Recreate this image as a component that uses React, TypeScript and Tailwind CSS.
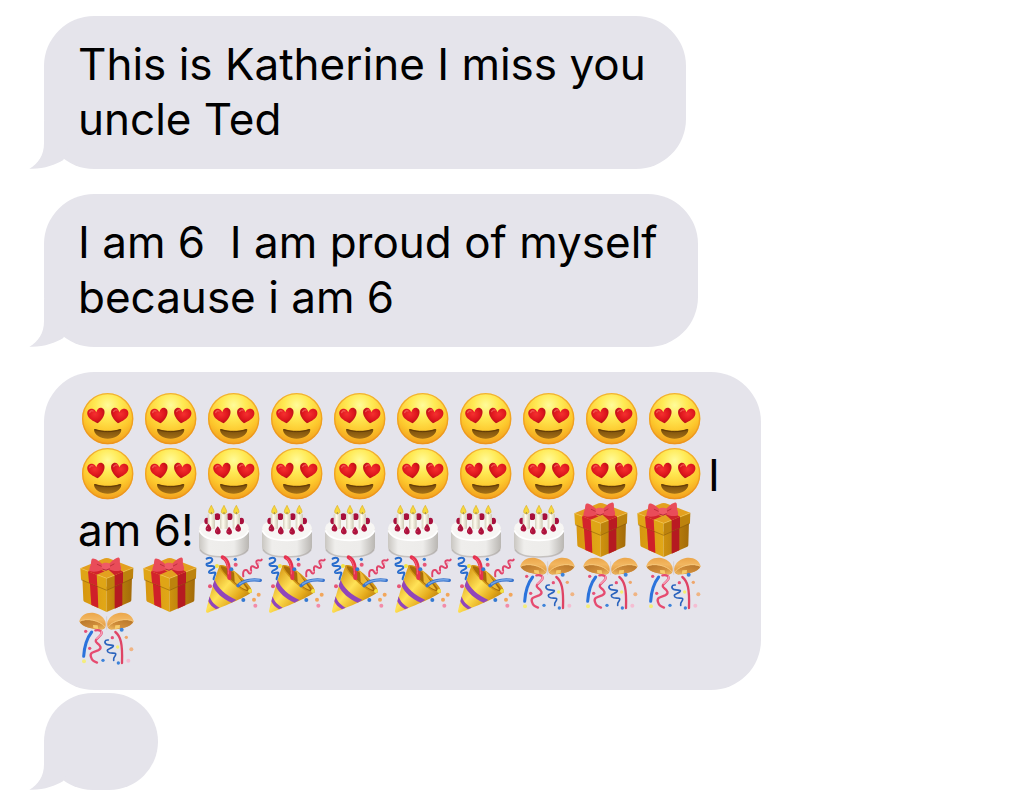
import type { ReactNode } from "react";

type EmojiName = "love" | "cake" | "gift" | "popper" | "ball";

const LABELS: Record<EmojiName, string> = {
  love: "smiling face with heart eyes",
  cake: "birthday cake",
  gift: "wrapped gift",
  popper: "party popper",
  ball: "confetti ball",
};

function EmojiSprite() {
  return (
    <svg className="absolute size-0" aria-hidden="true">
      <defs>
        <radialGradient id="face" cx="50%" cy="24%" r="78%">
          <stop offset="0" stopColor="#fffb9a" />
          <stop offset="0.3" stopColor="#ffea55" />
          <stop offset="0.68" stopColor="#fdc72c" />
          <stop offset="1" stopColor="#f09a1c" />
        </radialGradient>
        <radialGradient id="heart" cx="45%" cy="40%" r="65%">
          <stop offset="0" stopColor="#f5302f" />
          <stop offset="0.6" stopColor="#de161d" />
          <stop offset="1" stopColor="#ad0e15" />
        </radialGradient>
        <linearGradient id="mouth" x1="0" y1="0" x2="0" y2="1">
          <stop offset="0" stopColor="#774c0b" />
          <stop offset="1" stopColor="#a47016" />
        </linearGradient>
        <linearGradient id="icing" x1="0" y1="0" x2="1" y2="0">
          <stop offset="0" stopColor="#c9c6c1" />
          <stop offset="0.2" stopColor="#efeeec" />
          <stop offset="0.7" stopColor="#edecea" />
          <stop offset="1" stopColor="#b9b6b2" />
        </linearGradient>
        <linearGradient id="candle" x1="0" y1="0" x2="1" y2="0">
          <stop offset="0" stopColor="#d5cfbd" />
          <stop offset="0.4" stopColor="#fffdf0" />
          <stop offset="1" stopColor="#cfc8b4" />
        </linearGradient>
        <linearGradient id="boxLeft" x1="0" y1="0" x2="1" y2="0">
          <stop offset="0" stopColor="#d6960f" />
          <stop offset="1" stopColor="#e2a817" />
        </linearGradient>
        <linearGradient id="boxRight" x1="0" y1="0" x2="1" y2="0">
          <stop offset="0" stopColor="#cf920f" />
          <stop offset="1" stopColor="#a36b09" />
        </linearGradient>
        <linearGradient id="cone" x1="0" y1="0.3" x2="0.8" y2="1">
          <stop offset="0" stopColor="#d89713" />
          <stop offset="0.4" stopColor="#ffe257" />
          <stop offset="0.7" stopColor="#e5ab1c" />
          <stop offset="1" stopColor="#a96d08" />
        </linearGradient>
        <linearGradient id="shell" x1="0" y1="0" x2="0" y2="1">
          <stop offset="0" stopColor="#eba64a" />
          <stop offset="0.4" stopColor="#f2b660" />
          <stop offset="1" stopColor="#dc9238" />
        </linearGradient>
        <linearGradient id="shellInside" x1="0" y1="0" x2="1" y2="1">
          <stop offset="0" stopColor="#b5752a" />
          <stop offset="0.6" stopColor="#d08d3a" />
          <stop offset="1" stopColor="#f1bd62" />
        </linearGradient>
        <path
          id="heartShape"
          d="M32 49C19 43 3 35 1 22C-1 10 9 3 18 6C23 8 26 11 28 16C30 7 37 0 45 3C55 7 54 20 49 29C45 37 38 44 32 49Z"
        />
        <g id="halfShell">
          <path d="M4 25C8 6 28-4 49 0C71 4 86 22 83 38C82 47 76 50 66 49C44 48 10 42 4 25Z" fill="url(#shell)" />
          <path d="M5 26C24 15 64 22 81 42C78 48 73 50 65 49C44 48 12 42 5 26Z" fill="url(#shellInside)" />
          <path d="M5 25C25 14 64 21 81 41" fill="none" stroke="#f6c77a" strokeWidth="3" />
        </g>
      </defs>

      <symbol id="love" viewBox="0 0 189 165" overflow="visible">
        <circle cx="89" cy="77" r="77" fill="url(#face)" />
        <circle cx="89" cy="77" r="75" fill="none" stroke="#e98c1b" strokeWidth="4" opacity="0.6" />
        <use href="#heartShape" x="27" y="42" fill="url(#heart)" />
        <g transform="translate(152 42) scale(-1 1)">
          <use href="#heartShape" fill="url(#heart)" />
        </g>
        <path d="M35 59Q38 51 45 54" fill="none" stroke="#ff8d7d" strokeWidth="4" strokeLinecap="round" opacity="0.5" />
        <path d="M107 56Q111 49 117 51" fill="none" stroke="#ff8d7d" strokeWidth="4" strokeLinecap="round" opacity="0.5" />
        <path
          d="M48 111C48 107 51 107 55 109C76 115 102 115 123 109C127 107 130 107 130 111C128 127 110 137 89 137C68 137 50 127 48 111Z"
          fill="url(#mouth)"
        />
        <path d="M50 110C75 118 103 118 128 110" fill="none" stroke="#623b06" strokeWidth="3" />
      </symbol>

      <symbol id="cake" viewBox="0 0 189 165" overflow="visible">
        <path d="M15 77V132C15 151 48 163 90 163C132 163 165 151 165 132V77Z" fill="url(#icing)" />
        <path d="M18 140C28 156 58 162 90 162C122 162 152 156 162 140" fill="none" stroke="#aaa5a1" strokeWidth="5" opacity="0.6" />
        <ellipse cx="90" cy="77" rx="75" ry="34" fill="#f7f6f4" />
        <path d="M16 82C24 102 52 112 90 112C128 112 156 102 164 82" fill="none" stroke="#ffffff" strokeWidth="5" />
        <g fill="#a80f3c">
          <ellipse cx="70" cy="41" rx="9" ry="10" />
          <ellipse cx="107" cy="41" rx="9" ry="10" />
          <ellipse cx="39" cy="54" rx="8" ry="10" />
          <ellipse cx="142" cy="54" rx="8" ry="10" />
        </g>
        <g fill="url(#candle)">
          <rect x="41" y="32" width="22" height="46" rx="4" />
          <rect x="78" y="32" width="23" height="46" rx="4" />
          <rect x="116" y="32" width="22" height="46" rx="4" />
        </g>
        <g fill="#f7d93c" stroke="#dcae27" strokeWidth="2">
          <path d="M52 7C47 16 44 21 44 26C44 34 60 34 60 26C60 21 56 16 52 7Z" />
          <path d="M90 7C85 16 82 21 82 26C82 34 98 34 98 26C98 21 94 16 90 7Z" />
          <path d="M127 7C122 16 119 21 119 26C119 34 135 34 135 26C135 21 131 16 127 7Z" />
        </g>
        <g stroke="#746c59" strokeWidth="2">
          <path d="M52 27V34M90 27V34M127 27V34" />
        </g>
        <g fill="#ad123c">
          <path d="M43 62C36 71 34 75 35 79C36 88 52 88 52 78C52 73 48 67 43 62Z" />
          <path d="M71 70C65 78 62 83 63 87C65 97 80 97 80 86C80 81 76 75 71 70Z" />
          <path d="M105 71C99 79 96 84 97 88C99 98 114 98 114 87C114 82 110 76 105 71Z" />
          <path d="M132 62C126 70 123 75 124 79C126 89 141 89 141 78C141 73 137 67 132 62Z" />
        </g>
        <g fill="#df5373" opacity="0.7">
          <circle cx="40" cy="76" r="2" />
          <circle cx="68" cy="84" r="2" />
          <circle cx="102" cy="85" r="2" />
          <circle cx="129" cy="76" r="2" />
        </g>
      </symbol>

      <symbol id="gift" viewBox="0 0 189 165" overflow="visible">
        <path d="M13 58L86 86V162L19 131Q16 129 16 126Z" fill="url(#boxLeft)" />
        <path d="M86 86L162 54L160 126Q160 129 157 131L86 162Z" fill="url(#boxRight)" />
        <path d="M35 67L58 76L61 150L40 141Z" fill="#cf2029" />
        <path d="M110 76L133 67V142L110 152Z" fill="#b51a21" />
        <path d="M7 31L86 61V96L9 64Z" fill="#dfa516" />
        <path d="M86 61L166 29L165 60L86 96Z" fill="#bd830d" />
        <path d="M7 31L80 1Q86-1 92 1L166 29L86 61Z" fill="#e3a01f" />
        <path d="M9 65L86 97L165 61" fill="none" stroke="#80540a" strokeWidth="3" opacity="0.5" />
        <path d="M8 31L86 61L165 30" fill="none" stroke="#f3c548" strokeWidth="2" />
        <path d="M30 40L56 50L58 85L33 74Z" fill="#d3232c" />
        <path d="M110 52L135 41V74L110 85Z" fill="#ba1b23" />
        <path d="M30 40L54 30L80 40L56 50Z" fill="#d3232c" />
        <path d="M90 34L112 28L135 41L110 52Z" fill="#cc222b" />
        <path d="M76 22C64 9 50 0 43 2C38 4 41 13 37 23C34 32 32 38 38 40C50 43 66 39 78 33Z" fill="#e94c59" />
        <path d="M90 22C100 9 117-4 123-1C128 2 124 11 127 21C130 31 131 36 125 38C114 41 101 38 90 32Z" fill="#e94c59" />
        <path d="M75 27L58 19M93 26L108 18" stroke="#bf2f3d" strokeWidth="3" strokeLinecap="round" />
        <rect x="71" y="14" width="25" height="23" rx="9" fill="#ef5a66" />
        <path d="M73 33Q84 41 95 32" fill="none" stroke="#b32a37" strokeWidth="3" />
      </symbol>

      <symbol id="popper" viewBox="0 0 189 165" overflow="visible">
        <path d="M47 22C67 19 137 76 144 102C124 119 54 147 12 164Q5 166 6 158C17 116 33 58 47 22Z" fill="url(#cone)" />
        <path d="M47 22C59 16 94 37 119 64C139 84 148 99 141 104C130 110 102 91 78 68C56 47 40 27 47 22Z" fill="#d39818" />
        <path d="M51 25C62 23 91 43 112 65C130 83 138 96 135 99C125 102 103 86 82 66C61 46 48 30 51 25Z" fill="#a66b08" />
        <path d="M90 38L130 95C121 95 108 87 92 72Z" fill="#ecb933" />
        <path d="M32 65C40 90 66 111 97 126L83 134C57 123 34 103 26 83Z" fill="#9145ba" />
        <path d="M17 115C21 130 33 142 47 149L36 154C25 148 17 139 13 130Z" fill="#9145ba" />
        <path d="M56-2C71 4 78 29 76 60" fill="none" stroke="#e5324f" strokeWidth="12" strokeLinecap="round" />
        <path d="M58 0C69 9 74 27 73 49" fill="none" stroke="#ff6679" strokeWidth="3" />
        <path d="M102 83C116 69 137 63 169 67" fill="none" stroke="#3a74cc" strokeWidth="10" strokeLinecap="round" />
        <path d="M105 79C121 68 140 63 167 66" fill="none" stroke="#74a6e8" strokeWidth="4" />
        <path
          d="M8 2C19-5 29 2 23 10C16 19 5 14 8 21C12 29 29 19 31 27C33 36 13 35 15 43C18 51 36 37 34 47C33 53 29 57 29 64"
          fill="none" stroke="#286ccc" strokeWidth="6" strokeLinecap="round"
        />
        <path
          d="M118 55C116 42 119 34 127 36C134 38 132 49 139 46C146 42 136 30 143 25C150 21 155 35 161 29C167 23 151 14 159 8C165 3 169 12 173 5"
          fill="none" stroke="#e0446a" strokeWidth="6" strokeLinecap="round"
        />
        <path d="M159 12L166 17M136 38L142 43" stroke="#f8a2b8" strokeWidth="4" />
        <g fill="#3579d1">
          <circle cx="82" cy="34" r="6" />
          <circle cx="94" cy="4" r="5" />
          <circle cx="118" cy="126" r="6" />
        </g>
        <g fill="#e75677">
          <circle cx="18" cy="85" r="6" />
          <circle cx="95" cy="20" r="6" />
          <circle cx="154" cy="143" r="6" fill="#f38ba9" />
        </g>
        <g fill="#f2a65b">
          <circle cx="150" cy="125" r="6" />
          <circle cx="164" cy="110" r="6" />
        </g>
        <circle cx="39" cy="24" r="6" fill="#f4e443" />
        <circle cx="138" cy="99" r="6" fill="#f4e443" />
      </symbol>

      <symbol id="ball" viewBox="0 0 189 165" overflow="visible">
        <path d="M86 10V50" stroke="#d6d0d4" strokeWidth="3" />
        <use href="#halfShell" />
        <g transform="translate(171 0) scale(-1 1)">
          <use href="#halfShell" />
        </g>
        <path d="M45 36L59 37L61 49L46 45ZM126 36L112 37L110 49L125 45Z" fill="#f6cb6c" />
        <path d="M41 57C26 76 19 99 17 130" fill="none" stroke="#2b73dc" strokeWidth="9" strokeLinecap="round" />
        <path
          d="M52 52C66 49 76 56 68 66C58 78 47 81 57 90C69 98 72 107 60 112C45 117 34 120 39 132C42 143 47 145 57 149"
          fill="none" stroke="#e64b70" strokeWidth="7" strokeLinecap="round"
        />
        <path d="M69 55Q75 59 65 69L55 78" fill="none" stroke="#f59bb4" strokeWidth="5" />
        <path
          d="M91 81C79 80 77 90 88 95C99 98 111 94 104 102C95 108 83 109 90 117C97 124 115 116 113 125C112 131 105 132 107 142"
          fill="none" stroke="#2b63bd" strokeWidth="5" strokeLinecap="round"
        />
        <path d="M112 57C128 70 134 91 132 150" fill="none" stroke="#df4465" strokeWidth="7" strokeLinecap="round" />
        <g fill="#e65177">
          <circle cx="23" cy="55" r="5" />
          <circle cx="35" cy="106" r="5" />
          <circle cx="103" cy="74" r="5" />
          <circle cx="151" cy="143" r="6" fill="#f5bdd2" />
        </g>
        <g fill="#3d83da">
          <circle cx="131" cy="50" r="6" />
          <circle cx="75" cy="142" r="5" />
          <circle cx="121" cy="150" r="5" />
        </g>
        <circle cx="145" cy="73" r="5" fill="#efa66b" />
        <circle cx="160" cy="109" r="6" fill="#f0b483" />
        <circle cx="18" cy="145" r="6" fill="#f4ed7c" />
        <circle cx="119" cy="102" r="5" fill="#f5ef70" />
      </symbol>
    </svg>
  );
}

function Emoji({ name, count }: { name: EmojiName; count: number }) {
  return (
    <>
      {Array.from({ length: count }, (_, i) => (
        <svg
          key={i}
          role="img"
          aria-label={LABELS[name]}
          className="inline-block h-[55px] w-[63px] overflow-visible align-top"
        >
          <use href={`#${name}`} width="63" height="55" />
        </svg>
      ))}
    </>
  );
}

function Tail() {
  return (
    <svg
      viewBox="27 63 126 144"
      className="absolute bottom-0 -left-[15px] h-12 w-[42px] fill-[#e5e4eb]"
      aria-hidden="true"
    >
      <path d="M72 63V130C72 165 55 192 28 206C70 208 105 195 130 180L153 120V63Z" />
    </svg>
  );
}

function Bubble({ children, tail, className }: { children?: ReactNode; tail?: boolean; className: string }) {
  return (
    <li className={`relative w-fit rounded-[50px] bg-[#e5e4eb] pt-[21px] pl-[34px] ${className}`}>
      {tail && <Tail />}
      {children}
    </li>
  );
}

export default function App() {
  return (
    <main className="bg-white pt-4 pl-11 font-['Inter','Liberation_Sans',sans-serif] text-[44px] leading-[55px] text-black">
      <EmojiSprite />
      <ul>
        <Bubble tail className="pr-10 pb-[22px]">
          <p>
            This is Katherine I miss you
            <br />
            uncle Ted
          </p>
        </Bubble>
        <Bubble tail className="mt-[25px] pr-10 pb-[22px]">
          <p className="whitespace-pre-wrap">
            {"I am 6  I am proud of myself"}
            <br />
            because i am 6
          </p>
        </Bubble>
        <Bubble className="mt-[25px] max-w-[717px] pr-[34px] pb-[22px]">
          <p>
            <Emoji name="love" count={20} />I am 6!
            <Emoji name="cake" count={6} />
            <Emoji name="gift" count={4} />
            <Emoji name="popper" count={5} />
            <Emoji name="ball" count={4} />
          </p>
        </Bubble>
        <Bubble tail className="mt-[3px] min-h-[97px] min-w-[114px] pr-[34px] pb-[21px]" />
      </ul>
    </main>
  );
}
